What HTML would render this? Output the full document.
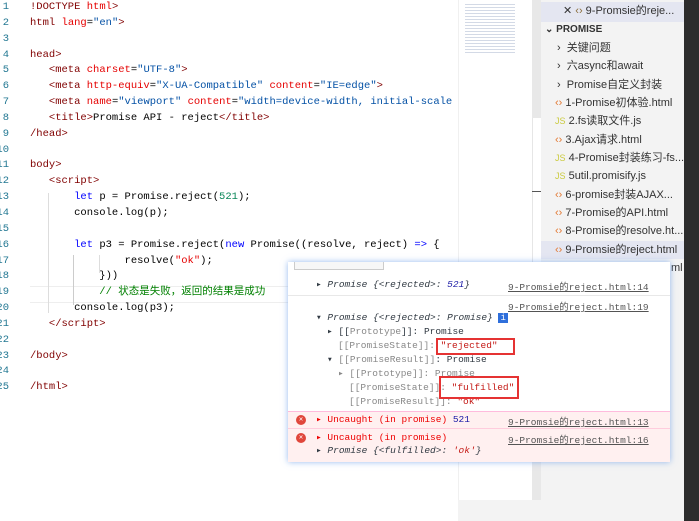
<!DOCTYPE html>
<html><head><meta charset="utf-8"><style>
*{margin:0;padding:0;box-sizing:border-box}
body{width:699px;height:521px;overflow:hidden;background:#fff;position:relative;font-family:"Liberation Mono","Noto Sans CJK SC",monospace;font-size:10.5px}
.k{color:#0000ff}.a{color:#e50000}.s{color:#0451a5}.t{color:#000}.c{color:#008000}.n{color:#098658}
.side{position:absolute;left:541px;top:0;width:143px;height:521px;background:#f3f3f3;font-family:"Liberation Sans","Noto Sans CJK SC",sans-serif;font-size:11px;color:#333}
.row{position:absolute;left:0;width:143px;height:18px;line-height:18px;white-space:nowrap;overflow:hidden}
.con{position:absolute;left:288px;top:262px;width:382px;height:200px;background:#fff;box-shadow:0 0 6px rgba(80,140,230,.6);font-size:9.5px;overflow:hidden}
.cr{position:absolute;white-space:pre;color:#303942}
.lk{position:absolute;left:220px;color:#545454;text-decoration:underline;white-space:pre}
.i{font-style:italic}
.box{position:absolute;border:2.5px solid #e53333}
</style></head><body>
<div style="position:absolute;left:0;top:0;width:9px;height:400px;overflow:hidden">
<div style="position:absolute;right:0;top:0;font-family:'Liberation Mono';font-size:10.5px;color:#237893;line-height:15.85px;text-align:right;white-space:pre">1
2
3
4
5
6
7
8
9
10
11
12
13
14
15
16
17
18
19
20
21
22
23
24
25</div></div>
<div style="position:absolute;left:30px;top:286px;width:428px;height:17px;border-top:1px solid #eee;border-bottom:1px solid #eee"></div>
<div style="position:absolute;left:48px;top:193px;width:1px;height:120px;background:#ddd"></div>
<div style="position:absolute;left:73px;top:255px;width:1px;height:50px;background:#ccc"></div>
<div style="position:absolute;left:99px;top:255px;width:1px;height:18px;background:#ddd"></div>
<div style="position:absolute;left:30px;top:0;line-height:15.85px;white-space:pre;color:#800000">!DOCTYPE <span class="a">html</span>&gt;
html <span class="a">lang</span><span class="t">=</span><span class="s">"en"</span>&gt;

head&gt;
   &lt;meta <span class="a">charset</span><span class="t">=</span><span class="s">"UTF-8"</span>&gt;
   &lt;meta <span class="a">http-equiv</span><span class="t">=</span><span class="s">"X-UA-Compatible"</span> <span class="a">content</span><span class="t">=</span><span class="s">"IE=edge"</span>&gt;
   &lt;meta <span class="a">name</span><span class="t">=</span><span class="s">"viewport"</span> <span class="a">content</span><span class="t">=</span><span class="s">"width=device-width, initial-scale</span>
   &lt;title&gt;<span class="t">Promise API - reject</span>&lt;/title&gt;
/head&gt;

body&gt;
   &lt;script&gt;
<span class="t">       <span class="k">let</span> p = Promise.reject(<span class="n">521</span>);</span>
<span class="t">       console.log(p);</span>

<span class="t">       <span class="k">let</span> p3 = Promise.reject(<span class="k">new</span> Promise((resolve, reject) <span class="k">=&gt;</span> {</span>
<span class="t">               resolve(<span class="a">"ok"</span>);</span>
<span class="t">           }))</span>
<span class="c">           // 状态是失败，返回的结果是成功</span>
<span class="t">       console.log(p3);</span>
   &lt;/script&gt;

/body&gt;

/html&gt;</div>
<div style="position:absolute;left:458px;top:0;width:75px;height:521px;background:#fff;border-left:1px solid #f0f0f0"></div>
<div style="position:absolute;left:465px;top:3px;width:50px;height:50px;background:repeating-linear-gradient(#fff 0 1px,#c8d0e0 1px 2px,#fff 2px 3px);opacity:.8"></div>
<div style="position:absolute;left:532px;top:0;width:9px;height:500px;background:#fff;border-left:1px solid #e6e6e6"></div>
<div style="position:absolute;left:532px;top:0;width:9px;height:118px;background:#e8e8e8"></div>
<div style="position:absolute;left:532px;top:400px;width:9px;height:118px;background:#e8e8e8"></div>
<div style="position:absolute;left:532px;top:191px;width:9px;height:1px;background:#555"></div>
<div style="position:absolute;left:458px;top:500px;width:83px;height:21px;background:#f3f3f3"></div>
<div class="side">
<div class="row" style="top:2px;height:20px;background:#e4e6f1;color:#333;padding-left:22px">✕ <span style="color:#8a6d3b">‹›</span> 9-Promsie的reje...</div>
<div class="row" style="top:21px;font-weight:bold;font-size:10px;padding-left:4px">⌄ PROMISE</div>
<div class="row" style="top:39px;padding-left:16px">›&nbsp; 关键问题</div>
<div class="row" style="top:57px;padding-left:16px">›&nbsp; 六async和await</div>
<div class="row" style="top:76px;padding-left:16px">›&nbsp; Promise自定义封装</div>
<div class="row" style="top:94px;padding-left:14px"><span style="color:#e37933">‹›</span> 1-Promise初体验.html</div>
<div class="row" style="top:112px;padding-left:14px"><span style="color:#cbcb41;font-size:9px">JS</span> 2.fs读取文件.js</div>
<div class="row" style="top:131px;padding-left:14px"><span style="color:#e37933">‹›</span> 3.Ajax请求.html</div>
<div class="row" style="top:149px;padding-left:14px"><span style="color:#cbcb41;font-size:9px">JS</span> 4-Promise封装练习-fs...</div>
<div class="row" style="top:167px;padding-left:14px"><span style="color:#cbcb41;font-size:9px">JS</span> 5util.promisify.js</div>
<div class="row" style="top:186px;padding-left:14px"><span style="color:#e37933">‹›</span> 6-promise封装AJAX...</div>
<div class="row" style="top:204px;padding-left:14px"><span style="color:#e37933">‹›</span> 7-Promise的API.html</div>
<div class="row" style="top:222px;padding-left:14px"><span style="color:#e37933">‹›</span> 8-Promise的resolve.ht...</div>
<div class="row" style="top:241px;padding-left:14px;background:#e4e6f1"><span style="color:#e37933">‹›</span> 9-Promsie的reject.html</div>
<div class="row" style="top:259px;padding-left:130px">ml</div>
</div>
<div style="position:absolute;left:684px;top:0;width:15px;height:521px;background:#2c2c2c"></div>
<div class="con">
<div style="position:absolute;left:6px;top:0;width:90px;height:8px;border:1px solid #ccc;border-top:none;background:#f7f7f7"></div>
<div style="position:absolute;left:0;top:33px;width:382px;height:1px;background:#e8e8e8"></div>
<div class="cr i" style="left:28px;top:17px">▸ Promise {&lt;rejected&gt;: <span style="color:#1a1aa6">521</span>}</div>
<div class="lk" style="top:17px">9-Promsie的reject.html:14</div>
<div class="lk" style="top:37px">9-Promsie的reject.html:19</div>
<div class="cr i" style="left:28px;top:50px">▾ Promise {&lt;rejected&gt;: Promise} <span style="background:#2f6fdb;color:#fff;font-style:normal;font-size:9px;padding:0 2px">i</span></div>
<div class="cr" style="left:39px;top:64px">▸ [[<span style="color:#888">Prototype</span>]]: Promise</div>
<div class="cr" style="left:50px;top:78px;color:#888">[[PromiseState]]: <span style="color:#c41a16">"rejected"</span></div>
<div class="cr" style="left:39px;top:92px">▾ <span style="color:#888">[[PromiseResult]]</span>: Promise</div>
<div class="cr" style="left:50px;top:106px;color:#888">▸ [[Prototype]]: Promise</div>
<div class="cr" style="left:61px;top:120px;color:#888">[[PromiseState]]: <span style="color:#c41a16">"fulfilled"</span></div>
<div class="cr" style="left:61px;top:134px;color:#888">[[PromiseResult]]: <span style="color:#c41a16">"ok"</span></div>
<div class="box" style="left:148px;top:76px;width:79px;height:17px"></div>
<div class="box" style="left:151px;top:114px;width:80px;height:23px"></div>
<div style="position:absolute;left:0;top:149px;width:382px;height:51px;background:#fff0f0;border-top:1px solid #fbd"></div>
<div style="position:absolute;left:0;top:166px;width:382px;height:1px;background:#fcd"></div>
<div style="position:absolute;left:8px;top:153px;width:10px;height:10px;border-radius:50%;background:#e0463b;color:#fff;font-size:7px;line-height:10px;text-align:center">✕</div>
<div style="position:absolute;left:8px;top:171px;width:10px;height:10px;border-radius:50%;background:#e0463b;color:#fff;font-size:7px;line-height:10px;text-align:center">✕</div>
<div class="cr" style="left:28px;top:152px;color:#e00">▸ Uncaught (in promise) <span style="color:#1a1aa6">521</span></div>
<div class="lk" style="top:152px">9-Promsie的reject.html:13</div>
<div class="cr" style="left:28px;top:170px;color:#e00">▸ Uncaught (in promise)</div>
<div class="lk" style="top:170px">9-Promsie的reject.html:16</div>
<div class="cr i" style="left:28px;top:183px">▸ Promise {&lt;fulfilled&gt;: <span style="color:#c41a16">'ok'</span>}</div>
</div>
</body></html>
